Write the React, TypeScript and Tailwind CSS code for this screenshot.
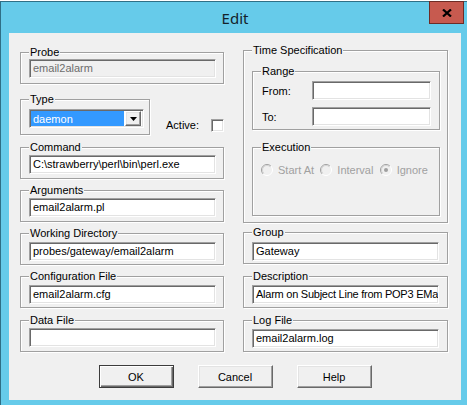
import clsx from "clsx"
import type { ReactNode } from "react"

// classic 3D edges
const sunken =
  "border border-t-[#a0a0a0] border-l-[#a0a0a0] border-r-white border-b-white shadow-[inset_1px_1px_0_#696969,inset_-1px_-1px_0_#e3e3e3]"
const raised =
  "border border-t-white border-l-white border-r-[#696969] border-b-[#696969] shadow-[inset_-1px_-1px_0_#a0a0a0,inset_1px_1px_0_#e3e3e3]"

function GroupBox({ label, className, children }: { label: string; className?: string; children?: ReactNode }) {
  return (
    <div className={clsx("relative border border-[#a0a0a0] shadow-[inset_1px_1px_0_#fff,1px_1px_0_#fff]", className)}>
      <span className="absolute -top-[8px] left-[8px] bg-[#f0f0f0] px-px leading-[14px]">{label}</span>
      {children}
    </div>
  )
}

function Field({ value = "", disabled, className }: { value?: string; disabled?: boolean; className?: string }) {
  return (
    <div
      className={clsx(
        sunken,
        "flex h-[19px] items-center overflow-hidden whitespace-nowrap pl-[3px] leading-[15px]",
        disabled ? "bg-[#f0f0f0] text-[#6d6d6d]" : "bg-white text-black",
        className
      )}
    >
      {value}
    </div>
  )
}

function Radio({ checked }: { checked?: boolean }) {
  return (
    <svg width="12" height="12" viewBox="0 0 12 12">
      <circle cx="6" cy="6" r="5.5" fill="#f0f0f0" />
      <path d="M2.1 9.9 A5.5 5.5 0 0 1 9.9 2.1" stroke="#a0a0a0" fill="none" />
      <path d="M9.9 2.1 A5.5 5.5 0 0 1 2.1 9.9" stroke="#ffffff" fill="none" />
      <path d="M2.8 9.2 A4.5 4.5 0 0 1 9.2 2.8" stroke="#d4d4d4" fill="none" />
      {checked && <circle cx="6" cy="6" r="2" fill="#a0a0a0" />}
    </svg>
  )
}

function DialogButton({ children, isDefault }: { children: ReactNode; isDefault?: boolean }) {
  return (
    <button
      className={clsx(
        "flex h-[23px] w-[75px] items-center justify-center bg-[#f0f0f0] leading-[14px]",
        isDefault
          ? "border border-[#3c3c3c] shadow-[inset_1px_1px_0_#fff,inset_-1px_-1px_0_#696969,inset_-2px_-2px_0_#a0a0a0]"
          : raised
      )}
    >
      {children}
    </button>
  )
}

function ExecOption({ label, checked }: { label: string; checked?: boolean }) {
  return (
    <div className="flex w-[63px] items-center gap-[5px] text-[#a0a0a0]">
      <Radio checked={checked} />
      <span>{label}</span>
    </div>
  )
}

export default function App() {
  return (
    <div className="h-[405px] w-[467px] overflow-hidden bg-white pt-px font-['Liberation_Sans',Arial,sans-serif] text-[11px] leading-[14px] text-black">
      <div className="relative flex h-[404px] flex-col border-l border-t border-[#2f6f86] bg-[#66cbea]">
        <div className="flex h-[31px] items-center justify-center pl-[2px] font-['Noto_Sans',sans-serif] text-[15px] text-[#14232b]">
          Edit
        </div>
        <button className="absolute -top-px left-[428px] flex h-[23px] w-[35px] items-center justify-center border border-[#6e2c26] bg-[#c75a4f]">
          <svg width="10" height="8" viewBox="0 0 10 8">
            <path d="M1 0.5 L9 7.5 M9 0.5 L1 7.5" stroke="#000" strokeWidth="2.2" />
          </svg>
        </button>

        <div className="ml-[8px] h-[367px] w-[452px] bg-[#f0f0f0]">
          <div className="flex">
            {/* left column */}
            <div className="ml-[11px] flex w-[204px] flex-col pt-[19px]">
              <GroupBox label="Probe" className="h-[32px] pl-[8px] pt-[6px]">
                <Field value="email2alarm" disabled className="w-[187px]" />
              </GroupBox>

              <div className="mt-[15px] flex">
                <GroupBox label="Type" className="h-[36px] w-[133px] pl-[8px] pt-[9px]">
                  <div className={clsx(sunken, "flex h-[19px] w-[115px] bg-white p-px")}>
                    <div className="flex w-[93px] items-center bg-[#3399ff] pl-[2px] text-white">daemon</div>
                    <div className={clsx(raised, "ml-px flex w-[16px] items-center justify-center bg-[#f0f0f0]")}>
                      <svg width="7" height="4" viewBox="0 0 7 4">
                        <polygon points="0,0 7,0 3.5,4" fill="#000" />
                      </svg>
                    </div>
                  </div>
                </GroupBox>
                <div className="mb-[3px] ml-[16px] flex items-center gap-[12px] self-end">
                  <span>Active:</span>
                  <div className={clsx(sunken, "h-[13px] w-[13px] bg-white")} />
                </div>
              </div>

              <GroupBox label="Command" className="mt-[12px] h-[32px] pl-[8px] pt-[7px]">
                <Field value="C:\strawberry\perl\bin\perl.exe" className="w-[187px]" />
              </GroupBox>
              <GroupBox label="Arguments" className="mt-[11px] h-[32px] pl-[8px] pt-[7px]">
                <Field value="email2alarm.pl" className="w-[187px]" />
              </GroupBox>
              <GroupBox label="Working Directory" className="mt-[11px] h-[32px] pl-[8px] pt-[8px]">
                <Field value="probes/gateway/email2alarm" className="w-[187px]" />
              </GroupBox>
              <GroupBox label="Configuration File" className="mt-[11px] h-[32px] pl-[8px] pt-[8px]">
                <Field value="email2alarm.cfg" className="w-[187px]" />
              </GroupBox>
              <GroupBox label="Data File" className="mt-[12px] h-[32px] pl-[8px] pt-[7px]">
                <Field className="w-[187px]" />
              </GroupBox>
            </div>

            {/* right column */}
            <div className="ml-[19px] flex w-[205px] flex-col pt-[17px]">
              <GroupBox label="Time Specification" className="h-[173px] pl-[8px] pt-[20px]">
                <GroupBox label="Range" className="h-[59px] w-[188px] pl-[9px] pt-[9px]">
                  <div className="flex items-center">
                    <span className="w-[50px]">From:</span>
                    <Field className="h-[18px] w-[119px]" />
                  </div>
                  <div className="mt-[7px] flex items-center">
                    <span className="w-[50px]">To:</span>
                    <Field className="h-[18px] w-[119px]" />
                  </div>
                </GroupBox>
                <GroupBox label="Execution" className="mt-[17px] h-[69px] w-[188px] pl-[8px] pt-[15px]">
                  <div className="flex">
                    <ExecOption label="Start At" />
                    <ExecOption label="Interval" />
                    <ExecOption label="Ignore" checked />
                  </div>
                </GroupBox>
              </GroupBox>

              <GroupBox label="Group" className="mt-[9px] h-[32px] pl-[8px] pt-[9px]">
                <Field value="Gateway" className="w-[187px]" />
              </GroupBox>
              <GroupBox label="Description" className="mt-[12px] h-[32px] pl-[8px] pt-[8px]">
                <Field value="Alarm on Subject Line from POP3 EMa" className="w-[187px] tracking-[-0.25px]" />
              </GroupBox>
              <GroupBox label="Log File" className="mt-[12px] h-[32px] pl-[8px] pt-[8px]">
                <Field value="email2alarm.log" className="w-[187px]" />
              </GroupBox>
            </div>
          </div>

          <div className="mt-[13px] flex justify-center gap-[24px]">
            <DialogButton isDefault>OK</DialogButton>
            <DialogButton>Cancel</DialogButton>
            <DialogButton>Help</DialogButton>
          </div>
        </div>
      </div>
    </div>
  )
}
